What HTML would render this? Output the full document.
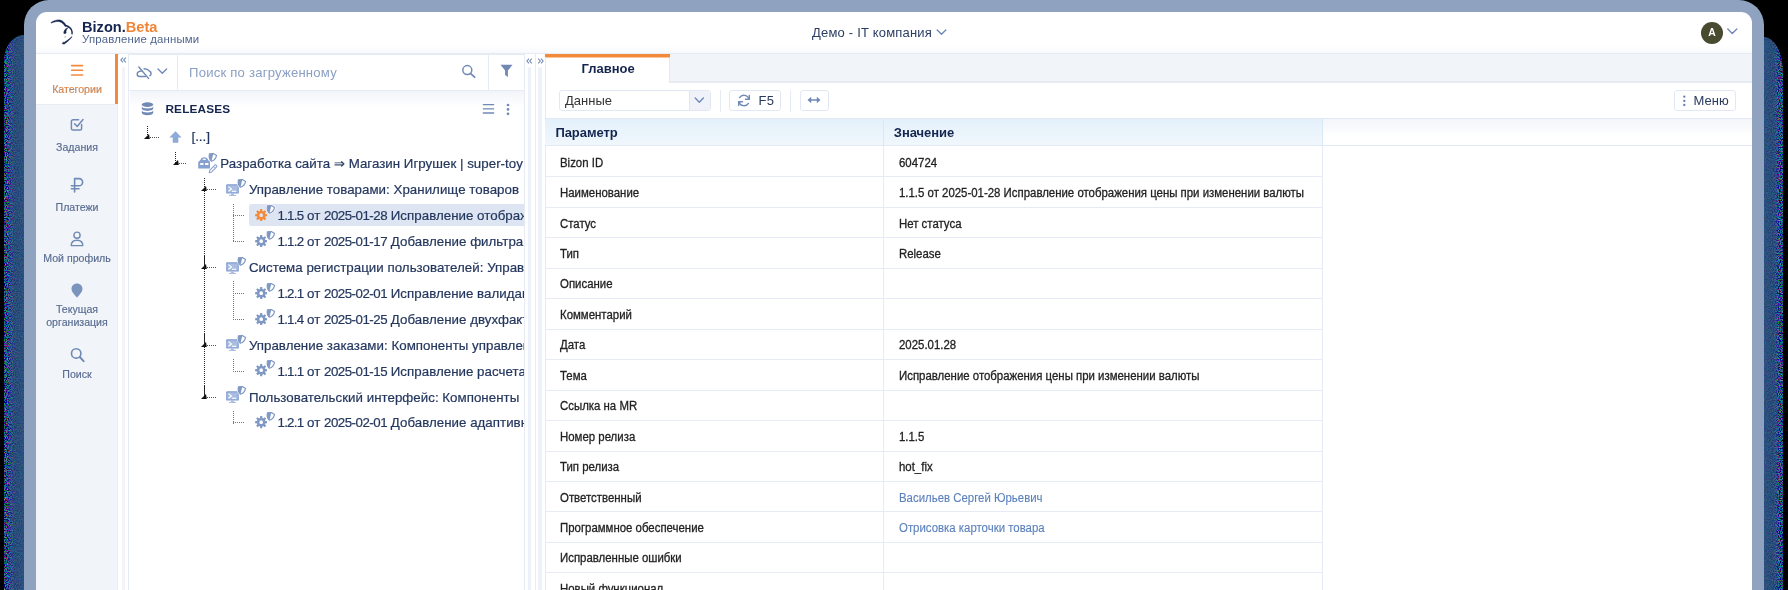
<!DOCTYPE html>
<html><head><meta charset="utf-8">
<style>
*{box-sizing:border-box;margin:0;padding:0}
html,body{width:1788px;height:590px;overflow:hidden;background:#000;font-family:"Liberation Sans",sans-serif;}
div,svg,span{position:absolute}
#shL{left:4px;top:35px;width:21px;height:560px;background:linear-gradient(270deg,#2c4f7e 0,#274872 50%,#2f4480 66%,#141c62 80%,#05083a 91%,#000 100%);border-top-left-radius:20px 26px;}
#shR{left:1763px;top:37px;width:20px;height:560px;background:linear-gradient(90deg,#2c4f7e 0,#274872 50%,#2f4480 66%,#141c62 80%,#05083a 91%,#000 100%);border-top-right-radius:19px 36px;}
#frame{left:24px;top:0;width:1740px;height:620px;background:#8fa3c0;border-radius:25px 25px 0 0;}
#app{left:36px;top:12px;width:1716px;height:600px;background:#fff;border-radius:11px 11px 0 0;overflow:hidden;}
#in{left:-36px;top:-12px;width:1788px;height:612px;will-change:transform;}
.t{white-space:nowrap;line-height:1;}
#shL,#shR{overflow:hidden}
.nz{left:0;top:0}
#shL .nz{-webkit-mask-image:linear-gradient(90deg,rgba(0,0,0,.8) 0,rgba(0,0,0,.6) 22%,rgba(0,0,0,.2) 45%,rgba(0,0,0,.1) 100%);mask-image:linear-gradient(90deg,rgba(0,0,0,.8) 0,rgba(0,0,0,.6) 22%,rgba(0,0,0,.2) 45%,rgba(0,0,0,.1) 100%)}
#shR .nz{-webkit-mask-image:linear-gradient(270deg,rgba(0,0,0,.8) 0,rgba(0,0,0,.6) 22%,rgba(0,0,0,.2) 45%,rgba(0,0,0,.1) 100%);mask-image:linear-gradient(270deg,rgba(0,0,0,.8) 0,rgba(0,0,0,.6) 22%,rgba(0,0,0,.2) 45%,rgba(0,0,0,.1) 100%)}
.nl{width:82px;left:36px;text-align:center;font-size:10.6px;color:#586b90;line-height:1;white-space:nowrap;-webkit-text-stroke:.15px #586b90}
.tr{font-size:13.3px;color:#24375e;white-space:nowrap;line-height:1;-webkit-text-stroke:.2px #24375e;letter-spacing:.03px}
.gl{font-size:12.5px;color:#222;white-space:nowrap;line-height:1;transform:scaleX(.913);transform-origin:0 0;-webkit-text-stroke:.3px #222}
.hl{height:1px;background:#e6ebf5}
.vl{width:1px;background:#e6ebf5}
.btn{border:1px solid #e2e8f3;border-radius:3px;background:#fff}
</style></head><body>
<div id="shL"><svg class="nz" width="21" height="560"><filter id="nf" x="0" y="0" width="100%" height="100%"><feTurbulence type="fractalNoise" baseFrequency=".85" numOctaves="2" seed="4"/><feColorMatrix type="matrix" values="1.8 0 0 0 -.9  0 2 0 0 -.85  0 0 1.8 0 -.55  0 0 0 0 1"/></filter><rect width="22" height="560" filter="url(#nf)"/></svg></div><div id="shR"><svg class="nz" width="20" height="560"><rect width="20" height="560" filter="url(#nf)"/></svg></div>
<div id="frame"></div>
<div id="app"><div id="in">

<div style="left:36px;top:46px;width:1716px;height:7px;background:linear-gradient(#fff,#f7f9fc)"></div>
<div class="hl" style="left:36px;top:52.8px;width:1716px;height:2px;background:#e6ebf4"></div>
<svg style="left:44px;top:14px" width="40" height="36" viewBox="44 14 40 36"><g fill="#14264f" stroke="#14264f" stroke-width=".55" stroke-linejoin="round">
<path d="M50.9 22.7C54 20.3 57.6 19.5 60.2 20.1 62.8 20.7 64.7 22.8 66.2 25.7L65.1 26.5C63.7 24.1 62 22.3 59.8 21.7 57.5 21.1 54.5 21.6 51.1 23.1z"/>
<path d="M67.9 27.7C65.3 28.6 63.7 30.6 63.8 33.3 64.7 33.8 65.7 33.6 66.1 33 65.7 31 66.4 29.2 67.9 27.7z"/>
<path d="M72 36.6C69.8 38.8 67 40.8 64.4 42.3 63.5 42 62.6 42.6 62.2 43.5 63 44.2 64.4 44.1 65 43.4 67.6 41.6 70.4 39.6 72 36.6z"/>
</g><circle cx="65.2" cy="36.9" r=".7" fill="#14264f" opacity=".5"/>
<path d="M65.6 25.5C68.3 26.3 70.5 27.7 71.5 30 72.3 31.8 72.3 32.6 72 33.7" fill="none" stroke="#14264f" stroke-width="1.4" stroke-linecap="round"/>
</svg>
<span class="t" style="left:82px;top:19.9px;font-size:14.6px;font-weight:bold;color:#14264f;letter-spacing:0px">Bizon.<span style="position:static;color:#f08537">Beta</span></span>
<span class="t" style="left:82px;top:34.3px;font-size:11.4px;color:#4f648c;letter-spacing:.16px">Управление данными</span>
<span class="t" style="left:812px;top:25.9px;font-size:13px;color:#2b3d63;letter-spacing:.2px">Демо - IT компания</span>
<svg style="left:935px;top:28.3px" width="13" height="9" viewBox="0 0 13 9"><path d="M2.2 2L6.5 6.3 10.8 2" fill="none" stroke="#7089b8" stroke-width="1.4" stroke-linecap="round" stroke-linejoin="round"/></svg>
<div style="left:1701px;top:21.8px;width:21.8px;height:21.8px;border-radius:50%;background:#484b2f"></div>
<span class="t" style="left:1701px;top:28.3px;width:21.8px;text-align:center;font-size:10.4px;font-weight:bold;color:#fff">A</span>
<svg style="left:1726px;top:26.5px" width="13" height="9" viewBox="0 0 13 9"><path d="M1.8 1.9 L6.3 6.5 L10.8 1.9" fill="none" stroke="#7089b8" stroke-width="1.4" stroke-linecap="round" stroke-linejoin="round"/></svg>
<div style="left:36px;top:54px;width:82.3px;height:560px;background:#f1f4f8;border-right:1px solid #e9edf5"></div>
<div style="left:36px;top:54px;width:79px;height:50px;background:#fff"></div>
<div style="left:114.7px;top:54px;width:3.6px;height:50.3px;background:#f38a3b"></div>
<div class="hl" style="left:36px;top:104px;width:79px;background:#e6ebf4"></div>
<svg style="left:70px;top:64px" width="14" height="13" viewBox="0 0 14 13"><g stroke="#f38a3b" stroke-width="1.6" stroke-linecap="round"><path d="M1.6 1.6H12.6M1.6 6.3H12.6M1.6 11H12.6"/></g></svg>
<span class="nl" style="top:84.3px;color:#f38a3b">Категории</span>
<svg style="left:70px;top:116.5px" width="15" height="15" viewBox="0 0 15 15"><path d="M11.6 7.6V11.4a1.6 1.6 0 0 1-1.6 1.6H3a1.6 1.6 0 0 1-1.6-1.6V4.4A1.6 1.6 0 0 1 3 2.8H8.6" fill="none" stroke="#7089b5" stroke-width="1.5" stroke-linecap="round"/><path d="M4.6 6.8l2.6 2.7L13 2.6" fill="none" stroke="#7089b5" stroke-width="1.5" stroke-linecap="round" stroke-linejoin="round"/></svg>
<span class="nl" style="top:142.4px">Задания</span>
<svg style="left:69.5px;top:176.5px" width="15" height="16" viewBox="0 0 15 16"><path d="M4.6 15V1.6H9a3.6 3.6 0 0 1 0 7.2H1.4M1.4 11.8H9" fill="none" stroke="#7089b5" stroke-width="1.6" stroke-linecap="round" stroke-linejoin="round"/></svg>
<span class="nl" style="top:201.5px">Платежи</span>
<svg style="left:70px;top:231px" width="14" height="16" viewBox="0 0 14 16"><circle cx="7" cy="4.2" r="3.1" fill="none" stroke="#7089b5" stroke-width="1.4"/><path d="M1.2 14.6c0-3.6 2.4-5.4 5.8-5.4s5.8 1.8 5.8 5.4z" fill="none" stroke="#7089b5" stroke-width="1.4" stroke-linejoin="round"/></svg>
<span class="nl" style="top:253px">Мой профиль</span>
<svg style="left:71px;top:283px" width="12" height="15" viewBox="0 0 12 15"><path d="M6 .4C2.9.4.5 2.8.5 5.7c0 3.4 3.6 6.6 5.5 9 1.9-2.4 5.5-5.6 5.5-9C11.5 2.8 9.1.4 6 .4z" fill="#7b94be"/></svg>
<span class="nl" style="top:303.8px">Текущая</span>
<span class="nl" style="top:316.9px">организация</span>
<svg style="left:69.5px;top:346.8px" width="15" height="16" viewBox="0 0 15 16"><circle cx="6.2" cy="6.4" r="4.7" fill="none" stroke="#7089b5" stroke-width="1.6"/><path d="M9.8 10l3.8 4.2" stroke="#7089b5" stroke-width="1.9" stroke-linecap="round"/></svg>
<span class="nl" style="top:369px">Поиск</span>
<div style="left:118.5px;top:54px;width:10px;height:560px;background:#fff"></div>
<div style="left:121.6px;top:67px;width:3.5px;height:560px;background:#f2f4fa;border-radius:2px"></div>
<svg style="left:119.7px;top:57.2px" width="7" height="6" viewBox="0 0 7 6"><path d="M3 .6L.9 3 3 5.4M5.8.6L3.7 3l2.1 2.4" fill="none" stroke="#6f88b8" stroke-width="1.1"/></svg>
<div class="vl" style="left:128.2px;top:54px;height:560px"></div>
<div class="hl" style="left:129px;top:89.7px;width:395.5px"></div>
<div style="left:129.5px;top:90.7px;width:395px;height:16px;background:linear-gradient(#f1f4f9,#fff)"></div>
<div class="vl" style="left:177.3px;top:54px;height:36px"></div>
<div class="vl" style="left:487.6px;top:54px;height:36px"></div>
<svg style="left:130px;top:58px" width="44" height="28" viewBox="130 58 44 28"><g fill="none" stroke="#7089b5" stroke-width="1.45" stroke-linecap="round" stroke-linejoin="round"><path d="M138.8 67L148.5 78.4"/><path d="M141.3 71C138.9 71.2 137.2 72.6 137.2 74.2 137.2 75.7 138.3 76.4 139.8 76.4H145.4"/><path d="M144.1 68.7C146.2 68.8 148.2 69.6 149.2 70.9 150.7 71.5 151.2 73 150.9 74.2 150.7 74.9 150.4 75.4 149.9 75.7"/><path d="M158 69.1L162.3 73.3 166.6 69.1" stroke="#7089b8" stroke-width="1.4"/></g></svg>
<span class="t" style="left:189px;top:66.3px;font-size:13.1px;color:#8a9fc3;letter-spacing:.22px">Поиск по загруженному</span>
<svg style="left:461.1px;top:63.9px" width="16" height="15" viewBox="0 0 16 15"><circle cx="6.3" cy="6.1" r="4.5" fill="none" stroke="#7089b5" stroke-width="1.5"/><path d="M9.7 9.6l3.9 3.6" stroke="#7089b5" stroke-width="1.8" stroke-linecap="round"/></svg>
<svg style="left:500px;top:64.2px" width="13" height="14" viewBox="0 0 13 14"><path d="M.5.8H12.5L7.9 6.6V13L5.1 11V6.6z" fill="#7089b5"/></svg>
<svg style="left:141.2px;top:102px" width="13" height="14" viewBox="0 0 13 14"><g fill="#7089b5"><ellipse cx="6.5" cy="2.6" rx="5.7" ry="2.3"/><path d="M.8 4.3c0 1.3 2.5 2.3 5.7 2.3s5.7-1 5.7-2.3v2.3c0 1.3-2.5 2.3-5.7 2.3S.8 7.9.8 6.6z"/><path d="M.8 8.2c0 1.3 2.5 2.3 5.7 2.3s5.7-1 5.7-2.3v2.6c0 1.3-2.5 2.4-5.7 2.4S.8 12.1.8 10.8z"/></g></svg>
<span class="t" style="left:165.4px;top:104.2px;font-size:11.8px;font-weight:bold;color:#14264f;letter-spacing:.18px">RELEASES</span>
<svg style="left:482px;top:102.8px" width="13" height="12" viewBox="0 0 13 12"><g stroke="#7089b5" stroke-width="1.3" stroke-linecap="round"><path d="M1.3 1.6H11.7M1.3 5.8H11.7M1.3 10H11.7"/></g></svg>
<svg style="left:505.2px;top:103px" width="6" height="13" viewBox="0 0 6 13"><g fill="#7089b5"><circle cx="3" cy="2" r="1.35"/><circle cx="3" cy="6.4" r="1.35"/><circle cx="3" cy="10.8" r="1.35"/></g></svg>
<div style="left:129px;top:91px;width:395.3px;height:520px;overflow:hidden"><div style="left:-129px;top:-91px;width:800px;height:600px">
<div style="left:146.7px;top:125.9px;width:1px;height:11.5px;background:repeating-linear-gradient(#222 0 1px,transparent 1px 2px)"></div>
<svg style="left:144px;top:134.2px" width="6" height="5" viewBox="0 0 6 5"><path d="M0 5L5.8 5 5 0z" fill="#111"/></svg>
<div style="left:150.2px;top:136.9px;width:8.5px;height:1px;background:repeating-linear-gradient(90deg,#555 0 1px,transparent 1px 2px)"></div>
<svg style="left:169px;top:130.8px" width="13" height="12" viewBox="0 0 13 12"><path d="M6.5 .2L12.6 6.4H9.3V11.8H3.7V6.4H.4z" fill="#8fa9d8"/></svg>
<span class="tr" style="left:191.5px;top:130.2px;letter-spacing:-.1px;font-size:13.6px">[...]</span>
<div style="left:175.3px;top:151.9px;width:1px;height:11.5px;background:repeating-linear-gradient(#222 0 1px,transparent 1px 2px)"></div>
<svg style="left:172.6px;top:160.2px" width="6" height="5" viewBox="0 0 6 5"><path d="M0 5L5.8 5 5 0z" fill="#111"/></svg>
<div style="left:178.8px;top:162.9px;width:8.5px;height:1px;background:repeating-linear-gradient(90deg,#555 0 1px,transparent 1px 2px)"></div>
<svg style="left:197.6px;top:157px" width="12.6" height="11.6" viewBox="0 0 12.6 11.6"><g fill="#86a0cf"><path d="M2.5 3.1C2.7 1.2 4 .2 6.3 .2 8.6 .2 9.9 1.2 10.1 3.1L12.4 5V11A.5.5 0 0 1 11.9 11.5H.7A.5.5 0 0 1 .2 11V5z"/></g><ellipse cx="6.3" cy="2.3" rx="1.8" ry=".8" fill="#fff"/><rect x="2" y="6.1" width="3.7" height="1.8" rx=".9" fill="#fff"/><rect x="6.9" y="6.1" width="3.7" height="1.8" rx=".9" fill="#fff"/></svg>
<svg style="left:207px;top:151.7px" width="10.8" height="10.6" viewBox="-1 -1 12 12" preserveAspectRatio="none"><g transform="rotate(13 5 5)"><path d="M5 .5L9.1 1.9C9.1 5.9 7.6 8.3 5 9.6 2.4 8.3 .9 5.9 .9 1.9z" fill="#fff" stroke="#fff" stroke-width="2.6" stroke-linejoin="round"/><path d="M5 .5L9.1 1.9C9.1 5.9 7.6 8.3 5 9.6 2.4 8.3 .9 5.9 .9 1.9z" fill="#fff" stroke="#7f98c4" stroke-width="1.25" stroke-linejoin="round"/><path d="M5 .5L.9 1.9C.9 5.9 2.4 8.3 5 9.6z" fill="#7f98c4"/></g></svg>
<svg style="left:208px;top:164.1px" width="10" height="10" viewBox="0 0 10 10"><path d="M1.2 8.8L1.9 6.1 6.6 1.4A1.2 1.2 0 0 1 8.4 3.2L3.7 7.9z" fill="#fff" stroke="#8aa2cf" stroke-width="1.1" stroke-linejoin="round"/><path d="M5.6 2.4L7.4 4.2" stroke="#8aa2cf" stroke-width=".9"/></svg>
<span class="tr" style="left:220.3px;top:157.4px">Разработка сайта ⇒ Магазин Игрушек | super-toy</span>
<div style="left:203.9px;top:177.8px;width:1px;height:11.5px;background:repeating-linear-gradient(#222 0 1px,transparent 1px 2px)"></div>
<svg style="left:201.2px;top:186.1px" width="6" height="5" viewBox="0 0 6 5"><path d="M0 5L5.8 5 5 0z" fill="#111"/></svg>
<div style="left:207.4px;top:188.8px;width:8.5px;height:1px;background:repeating-linear-gradient(90deg,#555 0 1px,transparent 1px 2px)"></div>
<svg style="left:226.2px;top:184px" width="13" height="13" viewBox="0 0 13 13"><rect x=".2" y=".3" width="12.6" height="9.3" rx=".9" fill="#809bd0"/><rect x="1.3" y="1.4" width="10.4" height="7.1" fill="#a9bde3"/><path d="M2.5 2.6L5.4 4.9 2.5 7.2" fill="none" stroke="#fff" stroke-width="1.2"/><path d="M6 7.3H10.2" stroke="#fff" stroke-width="1.1"/><path d="M5.2 9.6H7.8L8.2 11H4.8z" fill="#a9bde3"/><rect x="2.9" y="10.9" width="7.2" height="1.2" rx=".6" fill="#a9bde3"/></svg>
<svg style="left:236.2px;top:178.2px" width="10.8" height="10.6" viewBox="-1 -1 12 12" preserveAspectRatio="none"><g transform="rotate(13 5 5)"><path d="M5 .5L9.1 1.9C9.1 5.9 7.6 8.3 5 9.6 2.4 8.3 .9 5.9 .9 1.9z" fill="#fff" stroke="#fff" stroke-width="2.6" stroke-linejoin="round"/><path d="M5 .5L9.1 1.9C9.1 5.9 7.6 8.3 5 9.6 2.4 8.3 .9 5.9 .9 1.9z" fill="#fff" stroke="#7f98c4" stroke-width="1.25" stroke-linejoin="round"/><path d="M5 .5L.9 1.9C.9 5.9 2.4 8.3 5 9.6z" fill="#7f98c4"/></g></svg>
<span class="tr" style="left:248.9px;top:183.3px">Управление товарами: Хранилище товаров</span>
<div style="left:233px;top:215.1px;width:11.8px;height:1px;background:repeating-linear-gradient(90deg,#777 0 1px,transparent 1px 2px)"></div>
<div style="left:249px;top:204px;width:276px;height:21.6px;background:#dde5f2;border-radius:2px 0 0 2px"></div>
<svg style="left:254.6px;top:209px" width="12.4" height="12.4" viewBox="0 0 12 12"><path d="M5.05 .1H6.95L7.3 2.8H4.7z" transform="rotate(0 6 6)" fill="#f38a3b"/><path d="M5.05 .1H6.95L7.3 2.8H4.7z" transform="rotate(45 6 6)" fill="#f38a3b"/><path d="M5.05 .1H6.95L7.3 2.8H4.7z" transform="rotate(90 6 6)" fill="#f38a3b"/><path d="M5.05 .1H6.95L7.3 2.8H4.7z" transform="rotate(135 6 6)" fill="#f38a3b"/><path d="M5.05 .1H6.95L7.3 2.8H4.7z" transform="rotate(180 6 6)" fill="#f38a3b"/><path d="M5.05 .1H6.95L7.3 2.8H4.7z" transform="rotate(225 6 6)" fill="#f38a3b"/><path d="M5.05 .1H6.95L7.3 2.8H4.7z" transform="rotate(270 6 6)" fill="#f38a3b"/><path d="M5.05 .1H6.95L7.3 2.8H4.7z" transform="rotate(315 6 6)" fill="#f38a3b"/><circle cx="6" cy="6" r="2.95" fill="none" stroke="#f38a3b" stroke-width="2.3"/></svg>
<svg style="left:264.9px;top:203.9px" width="10.8" height="10.6" viewBox="-1 -1 12 12" preserveAspectRatio="none"><g transform="rotate(13 5 5)"><path d="M5 .5L9.1 1.9C9.1 5.9 7.6 8.3 5 9.6 2.4 8.3 .9 5.9 .9 1.9z" fill="#fff" stroke="#fff" stroke-width="2.6" stroke-linejoin="round"/><path d="M5 .5L9.1 1.9C9.1 5.9 7.6 8.3 5 9.6 2.4 8.3 .9 5.9 .9 1.9z" fill="#fff" stroke="#7f98c4" stroke-width="1.25" stroke-linejoin="round"/><path d="M5 .5L.9 1.9C.9 5.9 2.4 8.3 5 9.6z" fill="#7f98c4"/></g></svg>
<span class="tr" style="left:277.5px;top:209.2px"><span style="position:static;letter-spacing:-.75px">1.1.5</span> от <span style="position:static;letter-spacing:-.5px">2025-01-28</span> Исправление отображения цены</span>
<div style="left:233px;top:241px;width:11.8px;height:1px;background:repeating-linear-gradient(90deg,#777 0 1px,transparent 1px 2px)"></div>
<svg style="left:254.6px;top:234.9px" width="12.4" height="12.4" viewBox="0 0 12 12"><path d="M5.05 .1H6.95L7.3 2.8H4.7z" transform="rotate(0 6 6)" fill="#7f98c4"/><path d="M5.05 .1H6.95L7.3 2.8H4.7z" transform="rotate(45 6 6)" fill="#7f98c4"/><path d="M5.05 .1H6.95L7.3 2.8H4.7z" transform="rotate(90 6 6)" fill="#7f98c4"/><path d="M5.05 .1H6.95L7.3 2.8H4.7z" transform="rotate(135 6 6)" fill="#7f98c4"/><path d="M5.05 .1H6.95L7.3 2.8H4.7z" transform="rotate(180 6 6)" fill="#7f98c4"/><path d="M5.05 .1H6.95L7.3 2.8H4.7z" transform="rotate(225 6 6)" fill="#7f98c4"/><path d="M5.05 .1H6.95L7.3 2.8H4.7z" transform="rotate(270 6 6)" fill="#7f98c4"/><path d="M5.05 .1H6.95L7.3 2.8H4.7z" transform="rotate(315 6 6)" fill="#7f98c4"/><circle cx="6" cy="6" r="2.95" fill="none" stroke="#7f98c4" stroke-width="2.3"/></svg>
<svg style="left:264.9px;top:229.8px" width="10.8" height="10.6" viewBox="-1 -1 12 12" preserveAspectRatio="none"><g transform="rotate(13 5 5)"><path d="M5 .5L9.1 1.9C9.1 5.9 7.6 8.3 5 9.6 2.4 8.3 .9 5.9 .9 1.9z" fill="#fff" stroke="#fff" stroke-width="2.6" stroke-linejoin="round"/><path d="M5 .5L9.1 1.9C9.1 5.9 7.6 8.3 5 9.6 2.4 8.3 .9 5.9 .9 1.9z" fill="#fff" stroke="#7f98c4" stroke-width="1.25" stroke-linejoin="round"/><path d="M5 .5L.9 1.9C.9 5.9 2.4 8.3 5 9.6z" fill="#7f98c4"/></g></svg>
<span class="tr" style="left:277.5px;top:235.1px"><span style="position:static;letter-spacing:-.75px">1.1.2</span> от <span style="position:static;letter-spacing:-.5px">2025-01-17</span> Добавление фильтрации товаров</span>
<div style="left:203.9px;top:255.8px;width:1px;height:11.5px;background:repeating-linear-gradient(#222 0 1px,transparent 1px 2px)"></div>
<svg style="left:201.2px;top:264.1px" width="6" height="5" viewBox="0 0 6 5"><path d="M0 5L5.8 5 5 0z" fill="#111"/></svg>
<div style="left:207.4px;top:266.8px;width:8.5px;height:1px;background:repeating-linear-gradient(90deg,#555 0 1px,transparent 1px 2px)"></div>
<svg style="left:226.2px;top:261.7px" width="13" height="13" viewBox="0 0 13 13"><rect x=".2" y=".3" width="12.6" height="9.3" rx=".9" fill="#809bd0"/><rect x="1.3" y="1.4" width="10.4" height="7.1" fill="#a9bde3"/><path d="M2.5 2.6L5.4 4.9 2.5 7.2" fill="none" stroke="#fff" stroke-width="1.2"/><path d="M6 7.3H10.2" stroke="#fff" stroke-width="1.1"/><path d="M5.2 9.6H7.8L8.2 11H4.8z" fill="#a9bde3"/><rect x="2.9" y="10.9" width="7.2" height="1.2" rx=".6" fill="#a9bde3"/></svg>
<svg style="left:236.2px;top:255.9px" width="10.8" height="10.6" viewBox="-1 -1 12 12" preserveAspectRatio="none"><g transform="rotate(13 5 5)"><path d="M5 .5L9.1 1.9C9.1 5.9 7.6 8.3 5 9.6 2.4 8.3 .9 5.9 .9 1.9z" fill="#fff" stroke="#fff" stroke-width="2.6" stroke-linejoin="round"/><path d="M5 .5L9.1 1.9C9.1 5.9 7.6 8.3 5 9.6 2.4 8.3 .9 5.9 .9 1.9z" fill="#fff" stroke="#7f98c4" stroke-width="1.25" stroke-linejoin="round"/><path d="M5 .5L.9 1.9C.9 5.9 2.4 8.3 5 9.6z" fill="#7f98c4"/></g></svg>
<span class="tr" style="left:248.9px;top:261px">Система регистрации пользователей: Управление</span>
<div style="left:233px;top:292.8px;width:11.8px;height:1px;background:repeating-linear-gradient(90deg,#777 0 1px,transparent 1px 2px)"></div>
<svg style="left:254.6px;top:286.7px" width="12.4" height="12.4" viewBox="0 0 12 12"><path d="M5.05 .1H6.95L7.3 2.8H4.7z" transform="rotate(0 6 6)" fill="#7f98c4"/><path d="M5.05 .1H6.95L7.3 2.8H4.7z" transform="rotate(45 6 6)" fill="#7f98c4"/><path d="M5.05 .1H6.95L7.3 2.8H4.7z" transform="rotate(90 6 6)" fill="#7f98c4"/><path d="M5.05 .1H6.95L7.3 2.8H4.7z" transform="rotate(135 6 6)" fill="#7f98c4"/><path d="M5.05 .1H6.95L7.3 2.8H4.7z" transform="rotate(180 6 6)" fill="#7f98c4"/><path d="M5.05 .1H6.95L7.3 2.8H4.7z" transform="rotate(225 6 6)" fill="#7f98c4"/><path d="M5.05 .1H6.95L7.3 2.8H4.7z" transform="rotate(270 6 6)" fill="#7f98c4"/><path d="M5.05 .1H6.95L7.3 2.8H4.7z" transform="rotate(315 6 6)" fill="#7f98c4"/><circle cx="6" cy="6" r="2.95" fill="none" stroke="#7f98c4" stroke-width="2.3"/></svg>
<svg style="left:264.9px;top:281.6px" width="10.8" height="10.6" viewBox="-1 -1 12 12" preserveAspectRatio="none"><g transform="rotate(13 5 5)"><path d="M5 .5L9.1 1.9C9.1 5.9 7.6 8.3 5 9.6 2.4 8.3 .9 5.9 .9 1.9z" fill="#fff" stroke="#fff" stroke-width="2.6" stroke-linejoin="round"/><path d="M5 .5L9.1 1.9C9.1 5.9 7.6 8.3 5 9.6 2.4 8.3 .9 5.9 .9 1.9z" fill="#fff" stroke="#7f98c4" stroke-width="1.25" stroke-linejoin="round"/><path d="M5 .5L.9 1.9C.9 5.9 2.4 8.3 5 9.6z" fill="#7f98c4"/></g></svg>
<span class="tr" style="left:277.5px;top:286.9px"><span style="position:static;letter-spacing:-.75px">1.2.1</span> от <span style="position:static;letter-spacing:-.5px">2025-02-01</span> Исправление валидации форм</span>
<div style="left:233px;top:318.7px;width:11.8px;height:1px;background:repeating-linear-gradient(90deg,#777 0 1px,transparent 1px 2px)"></div>
<svg style="left:254.6px;top:312.6px" width="12.4" height="12.4" viewBox="0 0 12 12"><path d="M5.05 .1H6.95L7.3 2.8H4.7z" transform="rotate(0 6 6)" fill="#7f98c4"/><path d="M5.05 .1H6.95L7.3 2.8H4.7z" transform="rotate(45 6 6)" fill="#7f98c4"/><path d="M5.05 .1H6.95L7.3 2.8H4.7z" transform="rotate(90 6 6)" fill="#7f98c4"/><path d="M5.05 .1H6.95L7.3 2.8H4.7z" transform="rotate(135 6 6)" fill="#7f98c4"/><path d="M5.05 .1H6.95L7.3 2.8H4.7z" transform="rotate(180 6 6)" fill="#7f98c4"/><path d="M5.05 .1H6.95L7.3 2.8H4.7z" transform="rotate(225 6 6)" fill="#7f98c4"/><path d="M5.05 .1H6.95L7.3 2.8H4.7z" transform="rotate(270 6 6)" fill="#7f98c4"/><path d="M5.05 .1H6.95L7.3 2.8H4.7z" transform="rotate(315 6 6)" fill="#7f98c4"/><circle cx="6" cy="6" r="2.95" fill="none" stroke="#7f98c4" stroke-width="2.3"/></svg>
<svg style="left:264.9px;top:307.5px" width="10.8" height="10.6" viewBox="-1 -1 12 12" preserveAspectRatio="none"><g transform="rotate(13 5 5)"><path d="M5 .5L9.1 1.9C9.1 5.9 7.6 8.3 5 9.6 2.4 8.3 .9 5.9 .9 1.9z" fill="#fff" stroke="#fff" stroke-width="2.6" stroke-linejoin="round"/><path d="M5 .5L9.1 1.9C9.1 5.9 7.6 8.3 5 9.6 2.4 8.3 .9 5.9 .9 1.9z" fill="#fff" stroke="#7f98c4" stroke-width="1.25" stroke-linejoin="round"/><path d="M5 .5L.9 1.9C.9 5.9 2.4 8.3 5 9.6z" fill="#7f98c4"/></g></svg>
<span class="tr" style="left:277.5px;top:312.8px"><span style="position:static;letter-spacing:-.75px">1.1.4</span> от <span style="position:static;letter-spacing:-.5px">2025-01-25</span> Добавление двухфакторной</span>
<div style="left:203.9px;top:333.7px;width:1px;height:11.5px;background:repeating-linear-gradient(#222 0 1px,transparent 1px 2px)"></div>
<svg style="left:201.2px;top:342px" width="6" height="5" viewBox="0 0 6 5"><path d="M0 5L5.8 5 5 0z" fill="#111"/></svg>
<div style="left:207.4px;top:344.7px;width:8.5px;height:1px;background:repeating-linear-gradient(90deg,#555 0 1px,transparent 1px 2px)"></div>
<svg style="left:226.2px;top:339.4px" width="13" height="13" viewBox="0 0 13 13"><rect x=".2" y=".3" width="12.6" height="9.3" rx=".9" fill="#809bd0"/><rect x="1.3" y="1.4" width="10.4" height="7.1" fill="#a9bde3"/><path d="M2.5 2.6L5.4 4.9 2.5 7.2" fill="none" stroke="#fff" stroke-width="1.2"/><path d="M6 7.3H10.2" stroke="#fff" stroke-width="1.1"/><path d="M5.2 9.6H7.8L8.2 11H4.8z" fill="#a9bde3"/><rect x="2.9" y="10.9" width="7.2" height="1.2" rx=".6" fill="#a9bde3"/></svg>
<svg style="left:236.2px;top:333.6px" width="10.8" height="10.6" viewBox="-1 -1 12 12" preserveAspectRatio="none"><g transform="rotate(13 5 5)"><path d="M5 .5L9.1 1.9C9.1 5.9 7.6 8.3 5 9.6 2.4 8.3 .9 5.9 .9 1.9z" fill="#fff" stroke="#fff" stroke-width="2.6" stroke-linejoin="round"/><path d="M5 .5L9.1 1.9C9.1 5.9 7.6 8.3 5 9.6 2.4 8.3 .9 5.9 .9 1.9z" fill="#fff" stroke="#7f98c4" stroke-width="1.25" stroke-linejoin="round"/><path d="M5 .5L.9 1.9C.9 5.9 2.4 8.3 5 9.6z" fill="#7f98c4"/></g></svg>
<span class="tr" style="left:248.9px;top:338.7px">Управление заказами: Компоненты управления</span>
<div style="left:233px;top:370.5px;width:11.8px;height:1px;background:repeating-linear-gradient(90deg,#777 0 1px,transparent 1px 2px)"></div>
<svg style="left:254.6px;top:364.4px" width="12.4" height="12.4" viewBox="0 0 12 12"><path d="M5.05 .1H6.95L7.3 2.8H4.7z" transform="rotate(0 6 6)" fill="#7f98c4"/><path d="M5.05 .1H6.95L7.3 2.8H4.7z" transform="rotate(45 6 6)" fill="#7f98c4"/><path d="M5.05 .1H6.95L7.3 2.8H4.7z" transform="rotate(90 6 6)" fill="#7f98c4"/><path d="M5.05 .1H6.95L7.3 2.8H4.7z" transform="rotate(135 6 6)" fill="#7f98c4"/><path d="M5.05 .1H6.95L7.3 2.8H4.7z" transform="rotate(180 6 6)" fill="#7f98c4"/><path d="M5.05 .1H6.95L7.3 2.8H4.7z" transform="rotate(225 6 6)" fill="#7f98c4"/><path d="M5.05 .1H6.95L7.3 2.8H4.7z" transform="rotate(270 6 6)" fill="#7f98c4"/><path d="M5.05 .1H6.95L7.3 2.8H4.7z" transform="rotate(315 6 6)" fill="#7f98c4"/><circle cx="6" cy="6" r="2.95" fill="none" stroke="#7f98c4" stroke-width="2.3"/></svg>
<svg style="left:264.9px;top:359.3px" width="10.8" height="10.6" viewBox="-1 -1 12 12" preserveAspectRatio="none"><g transform="rotate(13 5 5)"><path d="M5 .5L9.1 1.9C9.1 5.9 7.6 8.3 5 9.6 2.4 8.3 .9 5.9 .9 1.9z" fill="#fff" stroke="#fff" stroke-width="2.6" stroke-linejoin="round"/><path d="M5 .5L9.1 1.9C9.1 5.9 7.6 8.3 5 9.6 2.4 8.3 .9 5.9 .9 1.9z" fill="#fff" stroke="#7f98c4" stroke-width="1.25" stroke-linejoin="round"/><path d="M5 .5L.9 1.9C.9 5.9 2.4 8.3 5 9.6z" fill="#7f98c4"/></g></svg>
<span class="tr" style="left:277.5px;top:364.6px"><span style="position:static;letter-spacing:-.75px">1.1.1</span> от <span style="position:static;letter-spacing:-.5px">2025-01-15</span> Исправление расчета скидок</span>
<div style="left:203.9px;top:385.6px;width:1px;height:11.5px;background:repeating-linear-gradient(#222 0 1px,transparent 1px 2px)"></div>
<svg style="left:201.2px;top:393.9px" width="6" height="5" viewBox="0 0 6 5"><path d="M0 5L5.8 5 5 0z" fill="#111"/></svg>
<div style="left:207.4px;top:396.6px;width:8.5px;height:1px;background:repeating-linear-gradient(90deg,#555 0 1px,transparent 1px 2px)"></div>
<svg style="left:226.2px;top:391.2px" width="13" height="13" viewBox="0 0 13 13"><rect x=".2" y=".3" width="12.6" height="9.3" rx=".9" fill="#809bd0"/><rect x="1.3" y="1.4" width="10.4" height="7.1" fill="#a9bde3"/><path d="M2.5 2.6L5.4 4.9 2.5 7.2" fill="none" stroke="#fff" stroke-width="1.2"/><path d="M6 7.3H10.2" stroke="#fff" stroke-width="1.1"/><path d="M5.2 9.6H7.8L8.2 11H4.8z" fill="#a9bde3"/><rect x="2.9" y="10.9" width="7.2" height="1.2" rx=".6" fill="#a9bde3"/></svg>
<svg style="left:236.2px;top:385.4px" width="10.8" height="10.6" viewBox="-1 -1 12 12" preserveAspectRatio="none"><g transform="rotate(13 5 5)"><path d="M5 .5L9.1 1.9C9.1 5.9 7.6 8.3 5 9.6 2.4 8.3 .9 5.9 .9 1.9z" fill="#fff" stroke="#fff" stroke-width="2.6" stroke-linejoin="round"/><path d="M5 .5L9.1 1.9C9.1 5.9 7.6 8.3 5 9.6 2.4 8.3 .9 5.9 .9 1.9z" fill="#fff" stroke="#7f98c4" stroke-width="1.25" stroke-linejoin="round"/><path d="M5 .5L.9 1.9C.9 5.9 2.4 8.3 5 9.6z" fill="#7f98c4"/></g></svg>
<span class="tr" style="left:248.9px;top:390.5px">Пользовательский интерфейс: Компоненты</span>
<div style="left:233px;top:422.3px;width:11.8px;height:1px;background:repeating-linear-gradient(90deg,#777 0 1px,transparent 1px 2px)"></div>
<svg style="left:254.6px;top:416.2px" width="12.4" height="12.4" viewBox="0 0 12 12"><path d="M5.05 .1H6.95L7.3 2.8H4.7z" transform="rotate(0 6 6)" fill="#7f98c4"/><path d="M5.05 .1H6.95L7.3 2.8H4.7z" transform="rotate(45 6 6)" fill="#7f98c4"/><path d="M5.05 .1H6.95L7.3 2.8H4.7z" transform="rotate(90 6 6)" fill="#7f98c4"/><path d="M5.05 .1H6.95L7.3 2.8H4.7z" transform="rotate(135 6 6)" fill="#7f98c4"/><path d="M5.05 .1H6.95L7.3 2.8H4.7z" transform="rotate(180 6 6)" fill="#7f98c4"/><path d="M5.05 .1H6.95L7.3 2.8H4.7z" transform="rotate(225 6 6)" fill="#7f98c4"/><path d="M5.05 .1H6.95L7.3 2.8H4.7z" transform="rotate(270 6 6)" fill="#7f98c4"/><path d="M5.05 .1H6.95L7.3 2.8H4.7z" transform="rotate(315 6 6)" fill="#7f98c4"/><circle cx="6" cy="6" r="2.95" fill="none" stroke="#7f98c4" stroke-width="2.3"/></svg>
<svg style="left:264.9px;top:411.1px" width="10.8" height="10.6" viewBox="-1 -1 12 12" preserveAspectRatio="none"><g transform="rotate(13 5 5)"><path d="M5 .5L9.1 1.9C9.1 5.9 7.6 8.3 5 9.6 2.4 8.3 .9 5.9 .9 1.9z" fill="#fff" stroke="#fff" stroke-width="2.6" stroke-linejoin="round"/><path d="M5 .5L9.1 1.9C9.1 5.9 7.6 8.3 5 9.6 2.4 8.3 .9 5.9 .9 1.9z" fill="#fff" stroke="#7f98c4" stroke-width="1.25" stroke-linejoin="round"/><path d="M5 .5L.9 1.9C.9 5.9 2.4 8.3 5 9.6z" fill="#7f98c4"/></g></svg>
<span class="tr" style="left:277.5px;top:416.4px"><span style="position:static;letter-spacing:-.75px">1.2.1</span> от <span style="position:static;letter-spacing:-.5px">2025-02-01</span> Добавление адаптивной верстки</span>
<div style="left:203.9px;top:189.4px;width:1px;height:207.7px;background:repeating-linear-gradient(#222 0 1px,transparent 1px 2px)"></div>
<div style="left:232.5px;top:203.6px;width:1px;height:38.7px;background:repeating-linear-gradient(#777 0 1px,transparent 1px 2px)"></div>
<div style="left:232.5px;top:281.3px;width:1px;height:38.7px;background:repeating-linear-gradient(#777 0 1px,transparent 1px 2px)"></div>
<div style="left:232.5px;top:359px;width:1px;height:12.8px;background:repeating-linear-gradient(#777 0 1px,transparent 1px 2px)"></div>
<div style="left:232.5px;top:410.8px;width:1px;height:12.8px;background:repeating-linear-gradient(#777 0 1px,transparent 1px 2px)"></div>
</div></div>
<div style="left:524.5px;top:54px;width:21px;height:560px;background:#fff"></div>
<div class="vl" style="left:524.3px;top:54px;height:560px"></div>
<div class="vl" style="left:534.5px;top:54px;height:560px"></div>
<div class="vl" style="left:544.8px;top:54px;height:560px"></div>
<div style="left:527.5px;top:67px;width:3.5px;height:560px;background:#edf1f8;border-radius:2px"></div>
<div style="left:538px;top:67px;width:3.5px;height:560px;background:#edf1f8;border-radius:2px"></div>
<svg style="left:526.3px;top:57.5px" width="7" height="6" viewBox="0 0 7 6"><path d="M3 .6L.9 3 3 5.4M5.8.6L3.7 3l2.1 2.4" fill="none" stroke="#748dbb" stroke-width="1.1"/></svg>
<svg style="left:536.7px;top:57.5px" width="7" height="6" viewBox="0 0 7 6"><path d="M1.2 .6L3.3 3 1.2 5.4M4 .6L6.1 3 4 5.4" fill="none" stroke="#748dbb" stroke-width="1.1"/></svg>
<div style="left:545.3px;top:54px;width:1207px;height:28px;background:#f1f4f8"></div>
<div class="hl" style="left:545.3px;top:80.8px;width:1207px;height:2px;background:#e6ebf4"></div>
<div style="left:545.3px;top:54px;width:124.5px;height:29px;background:#fff;border-right:1px solid #e3e9f4"></div>
<div style="left:545.3px;top:54px;width:124.5px;height:3.6px;background:linear-gradient(#f38a3b 0 3px,#f9c39b 3px 4px)"></div>
<span class="t" style="left:581.5px;top:62.3px;font-size:13px;font-weight:bold;color:#14264f">Главное</span>
<div class="vl" style="left:544.8px;top:57px;height:26px"></div>
<div class="btn" style="left:558.5px;top:89.7px;width:152px;height:21.5px;"></div>
<div style="left:689px;top:90.7px;width:20.5px;height:19.5px;background:#eff3f9;border-left:1px solid #dfe5f1;border-radius:0 2px 2px 0"></div>
<span class="t" style="left:565px;top:94.3px;font-size:13px;color:#333">Данные</span>
<svg style="left:693.3px;top:95.9px" width="13" height="9" viewBox="0 0 13 9"><path d="M2.2 2L6.3 6.3 10.4 2" fill="none" stroke="#7089b8" stroke-width="1.4" stroke-linecap="round" stroke-linejoin="round"/></svg>
<div class="vl" style="left:719.7px;top:90px;height:22px;background:#e6ebf4"></div>
<div class="btn" style="left:728.8px;top:89.7px;width:52.4px;height:21.5px;"></div>
<svg style="left:737px;top:94px" width="14" height="13" viewBox="0 0 14 13"><g fill="none" stroke="#7089b5" stroke-width="1.4" stroke-linecap="round" stroke-linejoin="round"><path d="M12 5.2A5.2 5.2 0 0 0 2.6 3.6"/><path d="M2 7.8A5.2 5.2 0 0 0 11.4 9.4"/><path d="M12.3 1.4V5.2H8.5"/><path d="M1.7 11.6V7.8H5.5"/></g></svg>
<span class="t" style="left:758.5px;top:94.4px;font-size:13px;color:#2a3b5f;letter-spacing:.2px">F5</span>
<div class="vl" style="left:790.4px;top:90px;height:22px;background:#e6ebf4"></div>
<div class="btn" style="left:800px;top:89.7px;width:29px;height:21.5px;"></div>
<svg style="left:807.2px;top:96.1px" width="14" height="8" viewBox="0 0 14 8"><path d="M.5 4L4.2 .7V3.2H9.8V.7L13.5 4 9.8 7.3V4.8H4.2V7.3z" fill="#7089b5"/></svg>
<div class="btn" style="left:1674.3px;top:89.7px;width:61.5px;height:21.7px;"></div>
<svg style="left:1682px;top:94.5px" width="5" height="12" viewBox="0 0 5 12"><g fill="#5f7bb0"><circle cx="2.3" cy="1.7" r="1.15"/><circle cx="2.3" cy="5.9" r="1.15"/><circle cx="2.3" cy="10" r="1.15"/></g></svg>
<span class="t" style="left:1693.6px;top:94.3px;font-size:13px;color:#2a3b5f">Меню</span>
<div class="hl" style="left:545.3px;top:118.3px;width:1207px;background:#e3e9f4"></div>
<div style="left:545.3px;top:119px;width:777.5px;height:26.5px;background:linear-gradient(#e3f0fa,#f1f8fd)"></div>
<div style="left:1323px;top:119px;width:429px;height:18px;background:linear-gradient(#f3f5f9,#fff)"></div>
<div class="hl" style="left:545.3px;top:145.4px;width:1207px;background:#e3e9f4"></div>
<div class="vl" style="left:883.3px;top:119px;height:27px;background:#d9e8f5"></div>
<div class="vl" style="left:1322.3px;top:119px;height:27px;background:#d9e8f5"></div>
<span class="t" style="left:555.4px;top:125.7px;font-size:13px;font-weight:bold;color:#14264f;letter-spacing:-.05px">Параметр</span>
<span class="t" style="left:893.8px;top:125.7px;font-size:13px;font-weight:bold;color:#14264f;letter-spacing:-.05px">Значение</span>
<span class="gl" style="left:559.8px;top:156.6px">Bizon ID</span>
<span class="gl" style="left:898.9px;top:156.6px;color:#222;-webkit-text-stroke:.3px #222">604724</span>
<div class="hl" style="left:545.3px;top:176.4px;width:777.5px"></div>
<span class="gl" style="left:559.8px;top:187px">Наименование</span>
<span class="gl" style="left:898.9px;top:187px;color:#222;-webkit-text-stroke:.3px #222">1.1.5 от 2025-01-28 Исправление отображения цены при изменении валюты</span>
<div class="hl" style="left:545.3px;top:206.9px;width:777.5px"></div>
<span class="gl" style="left:559.8px;top:217.5px">Статус</span>
<span class="gl" style="left:898.9px;top:217.5px;color:#222;-webkit-text-stroke:.3px #222">Нет статуса</span>
<div class="hl" style="left:545.3px;top:237.3px;width:777.5px"></div>
<span class="gl" style="left:559.8px;top:247.9px">Тип</span>
<span class="gl" style="left:898.9px;top:247.9px;color:#222;-webkit-text-stroke:.3px #222">Release</span>
<div class="hl" style="left:545.3px;top:267.8px;width:777.5px"></div>
<span class="gl" style="left:559.8px;top:278.4px">Описание</span>
<div class="hl" style="left:545.3px;top:298.2px;width:777.5px"></div>
<span class="gl" style="left:559.8px;top:308.9px">Комментарий</span>
<div class="hl" style="left:545.3px;top:328.7px;width:777.5px"></div>
<span class="gl" style="left:559.8px;top:339.3px">Дата</span>
<span class="gl" style="left:898.9px;top:339.3px;color:#222;-webkit-text-stroke:.3px #222">2025.01.28</span>
<div class="hl" style="left:545.3px;top:359.1px;width:777.5px"></div>
<span class="gl" style="left:559.8px;top:369.8px">Тема</span>
<span class="gl" style="left:898.9px;top:369.8px;color:#222;-webkit-text-stroke:.3px #222">Исправление отображения цены при изменении валюты</span>
<div class="hl" style="left:545.3px;top:389.6px;width:777.5px"></div>
<span class="gl" style="left:559.8px;top:400.2px">Ссылка на MR</span>
<div class="hl" style="left:545.3px;top:420.1px;width:777.5px"></div>
<span class="gl" style="left:559.8px;top:430.6px">Номер релиза</span>
<span class="gl" style="left:898.9px;top:430.6px;color:#222;-webkit-text-stroke:.3px #222">1.1.5</span>
<div class="hl" style="left:545.3px;top:450.5px;width:777.5px"></div>
<span class="gl" style="left:559.8px;top:461.1px">Тип релиза</span>
<span class="gl" style="left:898.9px;top:461.1px;color:#222;-webkit-text-stroke:.3px #222">hot_fix</span>
<div class="hl" style="left:545.3px;top:480.9px;width:777.5px"></div>
<span class="gl" style="left:559.8px;top:491.5px">Ответственный</span>
<span class="gl" style="left:898.9px;top:491.5px;color:#5b80bd;-webkit-text-stroke:.12px #5b80bd">Васильев Сергей Юрьевич</span>
<div class="hl" style="left:545.3px;top:511.4px;width:777.5px"></div>
<span class="gl" style="left:559.8px;top:522px">Программное обеспечение</span>
<span class="gl" style="left:898.9px;top:522px;color:#5b80bd;-webkit-text-stroke:.12px #5b80bd">Отрисовка карточки товара</span>
<div class="hl" style="left:545.3px;top:541.8px;width:777.5px"></div>
<span class="gl" style="left:559.8px;top:552.4px">Исправленные ошибки</span>
<div class="hl" style="left:545.3px;top:572.3px;width:777.5px"></div>
<span class="gl" style="left:559.8px;top:582.9px">Новый функционал</span>
<div class="hl" style="left:545.3px;top:602.8px;width:777.5px"></div>
<div class="vl" style="left:883.3px;top:146px;height:460px"></div>
<div class="vl" style="left:1322.3px;top:146px;height:460px"></div>
</div></div></body></html>
